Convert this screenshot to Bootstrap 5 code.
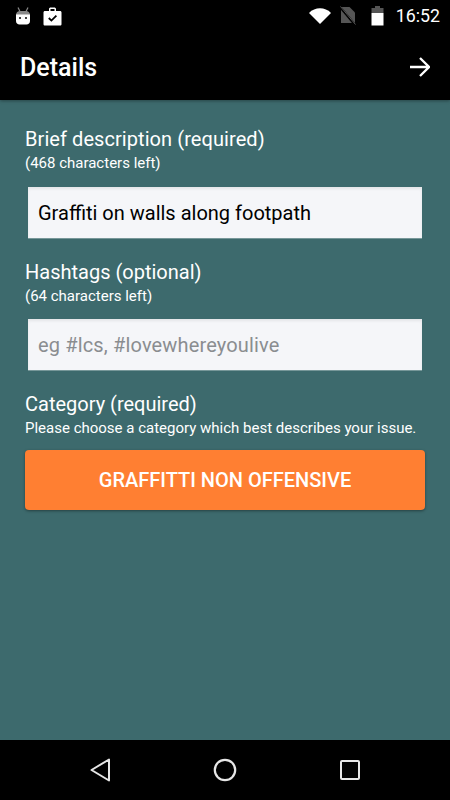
<!DOCTYPE html>
<html lang="en">
<head>
    <meta charset="UTF-8">
    <meta name="viewport" content="width=device-width, initial-scale=1.0">
    <title>Details</title>
    <link href="https://cdn.jsdelivr.net/npm/bootstrap@5.3.0/dist/css/bootstrap.min.css" rel="stylesheet">
    <style>
        html, body { height: 100%; }
        body { background: #3d6a6d; font-family: Roboto, "Liberation Sans", sans-serif; color: #fff; }
        .screen { height: 800px; width: 450px; }
        .status-bar { height: 32px; background: #000; padding: 0 10px 0 15px; }
        .status-time { font-size: 17.8px; line-height: 32px; margin-left: 12px; }
        .case-icon { margin-left: 12px; }
        .sim-icon { margin-left: 9px; }
        .batt-icon { margin-left: 15px; }
        .app-bar { height: 68px; background: #000; padding: 2px 20px 0; box-shadow: 0 1px 3px rgba(0,0,0,.35); }
        .app-title { font-size: 25px; font-weight: 500; margin: 0; line-height: 1; }
        .form-area { padding: 27px 25px 0; }
        .field-label { font-size: 20px; line-height: 24px; margin: 0; }
        .label-wide { letter-spacing: .07px; }
        .field-hint { font-size: 15px; line-height: 20px; margin: 2px 0 0; }
        .field-input.form-control { display: block; width: 394px; height: 51px; margin: 14px 0 22px 3px; padding: 0 10px; background: #f5f6f9; border: 0; border-radius: 0; font-size: 20px; color: #000; box-shadow: inset 0 2px 3px rgba(0,0,0,.07), 0 1px 0 rgba(255,255,255,.3); }
        .field-input.input-tight { margin-top: 13px; }
        .field-input.form-control::placeholder { color: #8a8d90; opacity: 1; letter-spacing: .15px; }
        .pick-btn.btn { display: block; width: 400px; height: 60px; margin-top: 12px; padding: 0; background: #ff7f32; border: 0; border-radius: 4px; color: #fff; font-size: 20px; font-weight: 500; box-shadow: 0 1px 3px rgba(0,0,0,.4); }
        .nav-bar { height: 60px; background: #000; }
        .nav-row { width: 270px; margin-left: 90px; }
    </style>
</head>
<body>
    <div class="screen d-flex flex-column">
        <div class="status-bar d-flex align-items-center">
            <svg width="16" height="18" viewBox="0 0 16 18"><path d="M3 .5 L5 4.500 M13 .5 L11 4.500" stroke="#8a8a8a" stroke-width="1.200"/><path d="M1 8 C1 5.500 3 4 5 4 H11 C13 4 15 5.500 15 8 Z" fill="#8a8a8a"/><path d="M1 7.500 H15 V14 C15 16 13.500 17.500 11.500 17.500 H4.500 C2.500 17.500 1 16 1 14 Z" fill="#fff"/><circle cx="5" cy="11" r="1" fill="#000"/><circle cx="11" cy="11" r="1" fill="#000"/></svg>
            <svg class="case-icon" width="19" height="19" viewBox="0 0 19 19"><path fill-rule="evenodd" d="M6 4 V2 C6 1 7 .5 7.500 .5 H11.500 C12 .5 13 1 13 2 V4 H17 C18 4 18.500 4.600 18.500 5.500 V17 C18.500 18 18 18.500 17 18.500 H2 C1 18.500 .5 18 .5 17 V5.500 C.5 4.600 1 4 2 4 Z M7.500 2 V4 H11.500 V2 Z" fill="#fff"/><path d="M5.800 11 L8.400 13.600 L13.400 8.600" fill="none" stroke="#000" stroke-width="1.800"/></svg>
            <div class="d-flex align-items-center ms-auto">
                <svg width="22" height="16" viewBox="0 0 22 16"><path d="M0 5 C6 -1.200 16 -1.200 22 5 L11 16 Z" fill="#fff"/></svg>
                <svg class="sim-icon" width="16" height="20" viewBox="0 0 16 20"><path d="M1 1 H9.500 L15 6.500 V17 H1 Z" fill="#555"/><path d="M0 1 L16 20" stroke="#000" stroke-width="2.400"/><path d="M.5 .5 L15.500 18.500" stroke="#555" stroke-width="1"/></svg>
                <svg class="batt-icon" width="13" height="20" viewBox="0 0 13 20"><path d="M4 0 H9 V2 H12.500 V7 H.5 V2 H4 Z" fill="#555"/><rect x=".5" y="7" width="12" height="12.500" fill="#fff"/></svg>
                <span class="status-time">16:52</span>
            </div>
        </div>
        <div class="app-bar d-flex align-items-center justify-content-between">
            <h1 class="app-title">Details</h1>
            <svg width="20" height="20" viewBox="0 0 20 20"><path d="M0 10 H18.500 M10 1 L19 10 L10 19" fill="none" stroke="#fff" stroke-width="2.300"/></svg>
        </div>
        <form class="form-area flex-grow-1">
            <p class="field-label label-wide">Brief description (required)</p>
            <p class="field-hint">(468 characters left)</p>
            <input class="form-control field-input" type="text" value="Graffiti on walls along footpath">
            <p class="field-label">Hashtags (optional)</p>
            <p class="field-hint">(64 characters left)</p>
            <input class="form-control field-input input-tight" type="text" placeholder="eg #lcs, #lovewhereyoulive">
            <p class="field-label">Category (required)</p>
            <p class="field-hint">Please choose a category which best describes your issue.</p>
            <button class="btn pick-btn" type="button">GRAFFITTI NON OFFENSIVE</button>
        </form>
        <div class="nav-bar d-flex align-items-center">
            <div class="nav-row d-flex align-items-center justify-content-between">
                <svg width="20" height="24" viewBox="0 0 20 24"><path d="M19 1.500 V22.500 L1.500 12 Z" fill="none" stroke="#e6e6e6" stroke-width="2" stroke-linejoin="round"/></svg>
                <svg width="24" height="24" viewBox="0 0 24 24"><circle cx="12" cy="12" r="10.200" fill="none" stroke="#e6e6e6" stroke-width="2.200"/></svg>
                <svg width="20" height="20" viewBox="0 0 20 20"><rect x="1" y="1" width="18" height="18" rx="1" fill="none" stroke="#e6e6e6" stroke-width="2"/></svg>
            </div>
        </div>
    </div>
    <script src="https://cdn.jsdelivr.net/npm/bootstrap@5.3.0/dist/js/bootstrap.bundle.min.js"></script>
</body>
</html>
